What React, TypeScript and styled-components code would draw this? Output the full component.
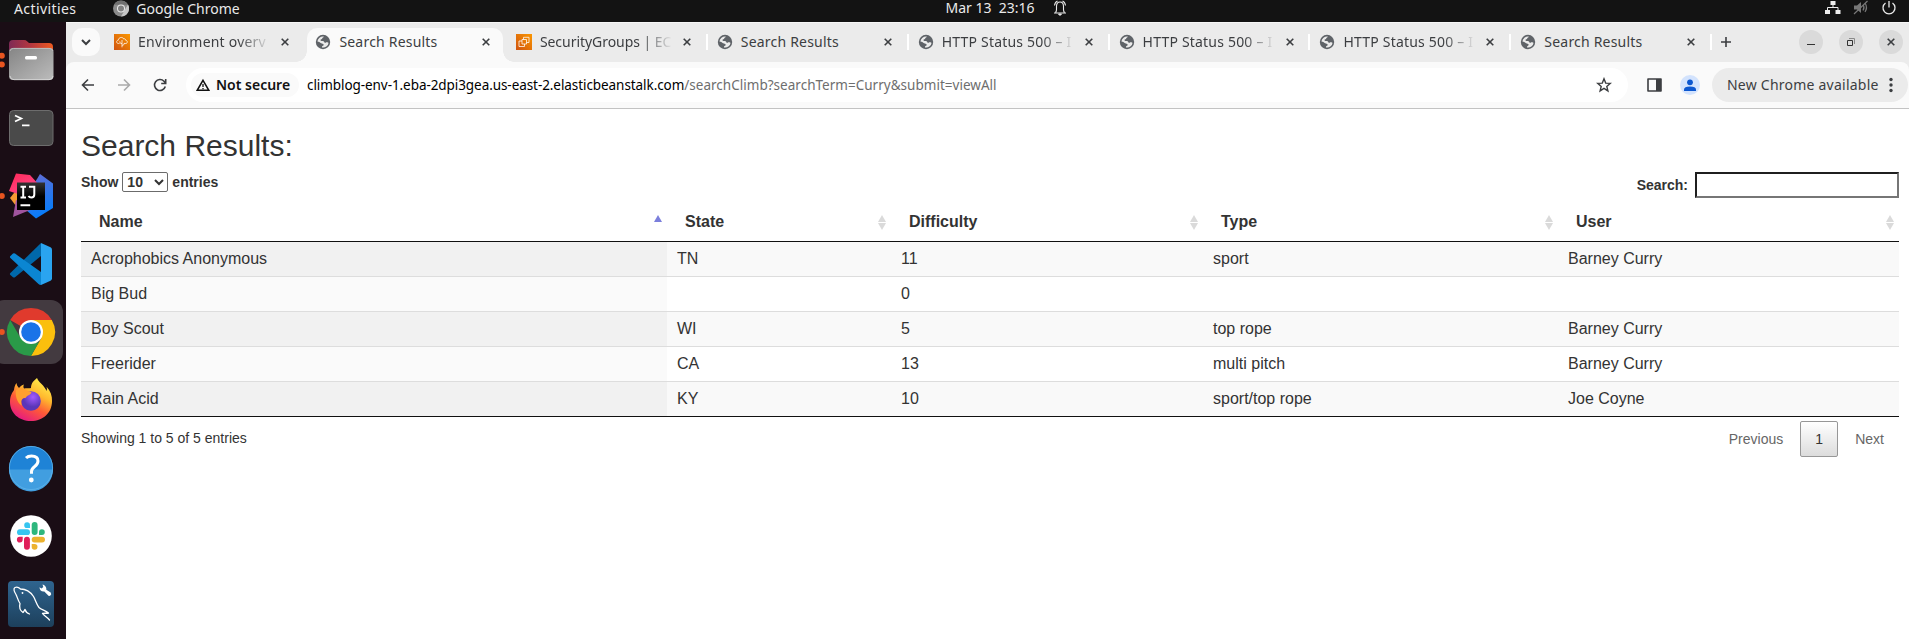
import React from "react";
import styled, { createGlobalStyle, css } from "styled-components";

const ui = `"Noto Sans", "Open Sans", sans-serif`;
const page = `"Liberation Sans", Arial, sans-serif`;

const GlobalStyle = createGlobalStyle`
  * { box-sizing: border-box; }
  html, body { margin: 0; height: 100%; overflow: hidden; background: #fff; }
  svg { display: block; flex: none; }
`;

const Desktop = styled.div`
  display: grid;
  grid-template: 22px 617px / 66px 1fr;
  width: 1909px;
  height: 639px;
  background: #fff;
  font-family: ${ui};
`;

const TopBar = styled.header`
  grid-column: 1 / -1;
  display: grid;
  grid-template-columns: 1fr auto 1fr;
  background: #131313;
  color: #eaeaea;
`;
const BarGroup = styled.div<{ $end?: boolean }>`
  display: flex;
  align-items: flex-start;
  ${(p) =>
    p.$end
      ? css`justify-content: flex-end; padding: 0 12px 0 0; gap: 12px;`
      : css`padding: 0 0 0 14px;`}
`;
const Label = styled.span<{ $size?: number; $track?: number; $weight?: number; $color?: string }>`
  display: block;
  white-space: pre;
  line-height: 18px;
  font-size: ${(p) => p.$size ?? 14}px;
  letter-spacing: ${(p) => p.$track ?? 0}px;
  font-weight: ${(p) => p.$weight ?? 400};
  color: ${(p) => p.$color ?? "inherit"};
`;
const AppMenu = styled.div`
  display: flex;
  gap: 7px;
  margin-left: 37px;
`;
const Clock = styled.div`
  display: flex;
  gap: 18px;
  height: 16px;
  align-items: center;
  padding-left: 103px;
`;

const Dock = styled.nav`
  display: flex;
  flex-direction: column;
  padding-top: 4px;
  background: #1a0d15;
  overflow: hidden;
`;
const Launcher = styled.div`
  flex: none;
  width: 66px;
  height: 68px;
`;

const Browser = styled.main`
  display: flex;
  flex-direction: column;
  background: #ebebeb;
  min-width: 0;
`;
const TabStrip = styled.div`
  display: flex;
  align-items: flex-start;
  height: 40px;
  padding: 5px 6px 0;
  border-top: 1px solid #f6f6f6;
`;
const TabSearch = styled.div`
  display: grid;
  place-items: center;
  width: 28px;
  height: 28px;
  margin-right: 5px;
  border-radius: 10px;
  background: #fafafa;
`;
const Tab = styled.div<{ $active?: boolean; $divider?: boolean }>`
  position: relative;
  display: flex;
  align-items: center;
  width: 200.9px;
  height: 34px;
  padding: 0 0 6px 9px;
  color: #3c3e41;
  ${(p) =>
    p.$active &&
    css`
      width: 196px;
      margin-left: 1px;
      margin-right: 4px;
      padding-left: 8.5px;
      border-radius: 10px 10px 0 0;
      background: #fafafa;
      &::before, &::after {
        content: "";
        position: absolute;
        bottom: 0;
        width: 11px;
        height: 11px;
      }
      &::before { left: -11px; background: radial-gradient(circle at 0 0, transparent 10.5px, #fafafa 11px); }
      &::after { right: -11px; background: radial-gradient(circle at 100% 0, transparent 10.5px, #fafafa 11px); }
    `}
  ${(p) =>
    p.$divider &&
    css`
      &::after {
        content: "";
        position: absolute;
        right: 0;
        top: 6px;
        width: 2px;
        height: 16px;
        background: #fff;
      }
    `}
`;
const TabTitle = styled.div<{ $fade?: boolean }>`
  width: 131px;
  margin: 0 12px 1px 8px;
  overflow: hidden;
  ${(p) => p.$fade && css`mask-image: linear-gradient(to right, #000 100px, transparent 133px);`}
`;
const NewTab = styled.div`
  display: grid;
  place-items: center;
  width: 28px;
  height: 28px;
`;
const WindowControls = styled.div`
  display: flex;
  gap: 16px;
  margin: 2px 0 0 auto;
`;
const RoundButton = styled.div`
  display: grid;
  place-items: center;
  width: 24px;
  height: 24px;
  border-radius: 50%;
  background: #dadada;
`;

const Toolbar = styled.div`
  display: flex;
  align-items: center;
  height: 47px;
  padding: 0 1px 0 4px;
  border-bottom: 1px solid #c3c3c3;
  border-radius: 8px 8px 0 0;
  background: #fafafa;
`;
const NavButton = styled.div`
  display: grid;
  place-items: center;
  width: 36px;
  height: 34px;
`;
const Omnibox = styled.div`
  display: flex;
  align-items: center;
  width: 1442px;
  height: 34px;
  margin: 0 19px 0 8px;
  padding: 0 16px 0 5px;
  border-radius: 17px;
  background: #fff;
`;
const SecurityChip = styled.div`
  display: flex;
  align-items: center;
  gap: 6px;
  width: 108px;
  height: 24px;
  padding-left: 5px;
  margin-right: 8px;
  border-radius: 12px;
  background: #fafafa;
  color: #111;
`;
const Url = styled.div`
  display: flex;
  flex: 1;
  color: #000;
`;
const Avatar = styled.div`
  display: grid;
  place-items: center;
  width: 20px;
  height: 20px;
  margin: 0 12px 0 18px;
  border-radius: 50%;
  background: #d3e3fd;
`;
const UpdateChip = styled.div`
  display: flex;
  align-items: center;
  justify-content: space-between;
  width: 196px;
  height: 34px;
  padding: 0 15px;
  border-radius: 17px;
  background: #ebebeb;
  color: #3c3e41;
`;

const Page = styled.section`
  flex: 1;
  padding: 20px 10px 0 15px;
  background: #fff;
  color: #333;
  font: 14px/20px ${page};
`;
const Title = styled.h2`
  margin: 0 0 10px;
  font-size: 30px;
  font-weight: 400;
  line-height: 33px;
`;
const Controls = styled.div`
  display: flex;
  justify-content: space-between;
  height: 30px;
  font-weight: 700;
`;
const LengthControl = styled.label`
  display: flex;
  align-items: flex-start;
  gap: 4px;
`;
const LengthSelect = styled.span`
  display: flex;
  align-items: center;
  justify-content: space-between;
  width: 46px;
  height: 20px;
  padding: 0 3px 0 4px;
  border: 1px solid #6b6b6b;
  border-radius: 2px;
`;
const SearchControl = styled.label`
  display: flex;
  align-items: center;
  gap: 7px;
  height: 26px;
`;
const SearchInput = styled.input`
  width: 204px;
  height: 26px;
  padding: 0;
  border: 2px solid;
  border-color: #1f1f1f #767676 #767676 #1f1f1f;
  background: #fff;
`;

const Table = styled.table`
  width: 1818px;
  table-layout: fixed;
  border-collapse: separate;
  border-spacing: 0;
  border-bottom: 1px solid #111;
  font-size: 16px;
  line-height: 18px;
`;
const HeadCell = styled.th`
  height: 40px;
  padding: 1px 5.5px 0 18px;
  border-bottom: 1px solid #111;
  text-align: left;
`;
const HeadContent = styled.div`
  display: flex;
  justify-content: space-between;
  align-items: center;
  height: 18px;
`;
const Cell = styled.td<{ $first: boolean; $sorted: boolean; $odd: boolean }>`
  height: ${(p) => (p.$first ? 34 : 35)}px;
  padding: 0 10px;
  border-top: ${(p) => (p.$first ? "0" : "1px solid #ddd")};
  background: ${(p) => (p.$odd ? (p.$sorted ? "#f1f1f1" : "#f9f9f9") : p.$sorted ? "#fafafa" : "#fff")};
`;

const Footer = styled.div`
  display: flex;
  justify-content: space-between;
  padding-top: 4px;
`;
const Info = styled.div`
  padding-top: 7px;
`;
const Pager = styled.div`
  display: flex;
  align-items: center;
  color: #666;
`;
const PageLink = styled.span`
  padding: 0 15px;
`;
const CurrentPage = styled.span`
  display: grid;
  place-items: center;
  width: 38px;
  height: 36px;
  margin: 0 2px;
  border: 1px solid #979797;
  border-radius: 2px;
  background: linear-gradient(#fff, #dcdcdc);
  color: #333;
`;

const Globe = () => (
  <svg width="16" height="16" viewBox="0 0 16 16">
    <circle cx="8" cy="8" r="7.200" fill="#5f6368" />
    <path
      d="M8.800 2.500C8.700 3.600 7.200 3.500 7.200 4.600c0 .9-1.700.5-1.700 1.500 0 .9.800 1 2.200.9 1.600-.1 1.300 1.600 2.300 1.800.9.200 1.200-.9 2.100-.8.700.1.700.9 1.500.7A5.600 5.600 0 0 1 7 13.500c-.1-1 .3-1.500 1-1.700.8-.3.900-1.300.2-1.800-.8-.5-1.900-.2-2.600-.9C4.900 8.300 3.900 7.500 2.400 7.500A5.600 5.600 0 0 1 8.800 2.500Z"
      fill="#ebebeb"
    />
  </svg>
);
const AwsIcon = ({ kind }: { kind: "beanstalk" | "ec2" }) => (
  <svg width="16" height="16" viewBox="0 0 16 16">
    <defs>
      <linearGradient id="aws" x1="0" y1="1" x2="1" y2="0">
        <stop stopColor="#cf5310" />
        <stop offset="1" stopColor="#fb9700" />
      </linearGradient>
    </defs>
    <path d="M0 0h16v16H0z" fill="url(#aws)" />
    <g fill="none" stroke="#fff" strokeWidth=".9" opacity=".85">
      {kind === "beanstalk" ? (
        <path d="M5.500 9.500H4.400C1.900 9.300 2.200 6.300 4.300 6.200 4.500 3 9 2.600 9.700 5c1-.6 1.900.1 1.900 1.200 2.400.3 2.100 3.300.2 3.300h-1.500M8 13.300V6M8 9.600C6 9.600 5.800 8.500 5.800 7.400M8 11.300c1.800 0 2.300-1 2.300-2.400" />
      ) : (
        <path d="M6 5.500h4.500V10H6zM7.500 5.500V3.300H13v5.200h-2.500M6 7H3v5.500h5.500V10" />
      )}
    </g>
  </svg>
);
const Close = ({ size = 8 }: { size?: number }) => (
  <svg width={size} height={size} viewBox="0 0 8 8">
    <path d="M.7.7l6.600 6.600M7.300.7L.7 7.300" stroke="#3c3e41" strokeWidth="1.600" />
  </svg>
);
const SortIcon = ({ asc }: { asc?: boolean }) => (
  <svg width="8" height="15" viewBox="0 0 8 15">
    <path d="M4 0l4 7H0z" fill={asc ? "#7b7fdc" : "#dadada"} />
    {!asc && <path d="M4 15l4-7H0z" fill="#dadada" />}
  </svg>
);

const Dots = ({ ys }: { ys: number[] }) => (
  <>
    {ys.map((y) => (
      <circle key={y} cx="1.800" cy={y} r="3" fill="#e95420" />
    ))}
  </>
);

const FilesIcon = () => (
  <svg width="66" height="68">
    <defs>
      <linearGradient id="fback"><stop stopColor="#7e2a55" /><stop offset=".5" stopColor="#b5373f" /><stop offset="1" stopColor="#ee5a20" /></linearGradient>
      <linearGradient id="ffront" x1="0" y1="0" x2="1" y2="1"><stop stopColor="#858585" /><stop offset="1" stopColor="#bcbcbc" /></linearGradient>
    </defs>
    <Dots ys={[29.7, 38.4]} />
    <path d="M9 30V18q0-4 4-4h11q2 0 3 1.200l2 1.800h20q4 0 4 4v9z" fill="url(#fback)" />
    <rect x="9" y="22" width="44.500" height="32" rx="4" fill="url(#ffront)" />
    <path d="M10 50q.5 3.700 4 3.700h35q3.500 0 4-3.700" fill="none" stroke="#dedede" strokeWidth=".8" />
    <path d="M10 25q.5-2.600 3.500-2.600h35.500q3.500 0 4 2.600" fill="none" stroke="#c8c8c8" strokeWidth=".8" />
    <rect x="25" y="30" width="12" height="3.500" rx="1.500" fill="#fff" />
  </svg>
);
const TerminalIcon = () => (
  <svg width="66" height="68">
    <rect x="9.500" y="16.500" width="43.500" height="35" rx="4" fill="#4a4a4a" stroke="#6d6d6d" />
    <path d="M15 21.500l6.300 3-6.300 3M22 31.300h7.500" fill="none" stroke="#fff" strokeWidth="1.800" />
  </svg>
);
const IdeaIcon = () => (
  <svg width="66" height="68">
    <defs>
      <linearGradient id="ijb" x1="0" y1="0" x2=".3" y2="1"><stop stopColor="#6b6bd0" /><stop offset="1" stopColor="#087cfa" /></linearGradient>
      <linearGradient id="ijp" x1="0" y1="0" x2="1" y2="1"><stop stopColor="#fe2857" /><stop offset=".5" stopColor="#ff3d77" /><stop offset="1" stopColor="#7a62c8" /></linearGradient>
      <linearGradient id="ijk" x1="0" y1="0" x2="0" y2="1"><stop stopColor="#333" /><stop offset=".5" stopColor="#000" /></linearGradient>
    </defs>
    <Dots ys={[34]} />
    <path d="M18 26L10 36l6 8 10-2z" fill="#f49a32" />
    <path d="M40 12l13 9.500V46L36 56.500 26 48l8-26z" fill="url(#ijb)" />
    <path d="M16 38l-3 17 22-9z" fill="#a0549e" />
    <path d="M16 11.500L30 13l10 11 5 8H18L9 29z" fill="url(#ijp)" />
    <path d="M17 20.500h28V48H17z" fill="url(#ijk)" />
    <path d="M20.500 24.800h5.500M23.200 24.800v10.700M20.500 35.500h5.500M29 24.800h5.300v7.700q0 3-3 3-1.800 0-2.800-1.500M20.500 43.200h9.700" fill="none" stroke="#fff" strokeWidth="2" />
  </svg>
);
const CodeIcon = () => (
  <svg width="66" height="68">
    <path d="M41 13v13L15 47.300q-1 .6-2 0L10.400 45q-1-1 0-2z" fill="#0068ab" />
    <path d="M10.400 28q-1-1 0-2l2.600-2.400q1-.6 2 0L41 42v13q-1.500 0-2.500-1z" fill="#0b86d2" />
    <path d="M41 13l9.500 4.300q1.500.8 1.500 2.500v28.400q0 1.700-1.500 2.500L41 55z" fill="#2aa4f0" />
  </svg>
);
const ChromeIcon = () => (
  <svg width="66" height="68">
    <rect x="-8" y="2" width="71" height="64" rx="12" fill="#433a40" />
    <Dots ys={[34]} />
    <path d="M31 34L10.200 22a24 24 0 0 1 41.600 0z" fill="#e03a2d" />
    <path d="M31 22h20.800A24 24 0 0 1 31 58l10.400-18z" fill="#fbbf0d" />
    <path d="M31 58A24 24 0 0 1 10.200 22l10.400 18L31 46l8-2z" fill="#2a9a48" />
    <path d="M41.400 40L31 58l8-14z" fill="#fbbf0d" />
    <circle cx="31" cy="34" r="12" fill="#fff" />
    <circle cx="31" cy="34" r="9.800" fill="#1a73e8" />
  </svg>
);
const FirefoxIcon = () => (
  <svg width="66" height="68">
    <defs>
      <linearGradient id="fx" x1=".8" y1="0" x2=".25" y2="1"><stop stopColor="#fff44f" /><stop offset=".35" stopColor="#ffb82e" /><stop offset=".62" stopColor="#ff5a36" /><stop offset="1" stopColor="#e31587" /></linearGradient>
      <radialGradient id="fxp" cx=".6" cy=".3"><stop stopColor="#a35bff" /><stop offset="1" stopColor="#5a36b8" /></radialGradient>
    </defs>
    <path d="M10 36c0-6 2-9 4-12 .3-3 1-5 2.500-7 .3 2 1 3.500 2.500 5 1.500-1.800 3-3 5-3.500-.8 1.200-.8 2.500 0 4 3-.6 5 0 7-.5 0-5 3-7.500 6-10 .8 3 4 5 6 7.500s3 4 3.500 5.500c.6-1.600.6-2.600 0-4.300 4 4.300 5.800 9 5.500 14.300C52 47 43 55 31 55S10 47 10 36z" fill="url(#fx)" />
    <circle cx="31" cy="35" r="9.800" fill="url(#fxp)" />
    <path d="M16 24c5-3 8-1.500 11 .8 2 .8 4 1 4.500 1.500-.5 3-5.500 3.300-5.500 5.500-4 0-6 3-4 8-5-3-7-10-6-15.800z" fill="#ffa030" />
  </svg>
);
const HelpIcon = () => (
  <svg width="66" height="68">
    <circle cx="31" cy="34" r="22" fill="#1f83d6" />
    <path d="M9 35.500h44A22 22 0 0 1 9 35.500z" fill="#419ee0" />
    <circle cx="31" cy="34" r="21.600" fill="none" stroke="#5fb4ea" strokeWidth=".8" />
    <path d="M26 24q2-2 5.500-2 6.500 0 6.500 5 0 3-3.300 5.500Q31.500 35 31.500 37.500v2.300" fill="none" stroke="#fff" strokeWidth="3" />
    <circle cx="31.300" cy="46" r="2.400" fill="#fff" />
  </svg>
);
const SlackIcon = () => (
  <svg width="66" height="68">
    <circle cx="31" cy="34" r="20.800" fill="#fff" />
    <g fill="#36c5f0"><rect x="17" y="27.300" width="13" height="5.800" rx="2.900" /><path d="M30 26v-3a2.900 2.900 0 1 0-2.900 3z" /></g>
    <g fill="#2eb67d"><rect x="31.700" y="20" width="5.900" height="13" rx="2.900" /><path d="M39 33h3a2.900 2.900 0 1 0-3-2.900z" /></g>
    <g fill="#ecb22e"><rect x="31.700" y="34.700" width="13.300" height="5.800" rx="2.900" /><path d="M31.700 42v3a2.900 2.900 0 1 0 2.900-3z" /></g>
    <g fill="#e01e5a"><rect x="24" y="34.700" width="5.900" height="13" rx="2.900" /><path d="M22.700 34.700h-3a2.900 2.900 0 1 0 3 2.900z" /></g>
  </svg>
);
const WorkbenchIcon = () => (
  <svg width="66" height="68">
    <defs><linearGradient id="wb" x1="0" y1="0" x2="0" y2="1"><stop stopColor="#2f648f" /><stop offset="1" stopColor="#1d405c" /></linearGradient></defs>
    <rect x="8" y="11" width="46" height="46" rx="4" fill="url(#wb)" />
    <g fill="none" stroke="#fff" strokeWidth="1.300" strokeLinejoin="round" strokeLinecap="round">
      <path d="M29.500 44c-2.500-1-4-2.500-4.500-4.500-1 1-1 2.500-2 3-3-2-4-5-3-9-2-3-2.500-6-4-9-2-3-2.800-6-1-7 2-1 4 0 5.500 1.500 6 0 10 3 13 7.500 2 3.500 3 8 5.500 11 2 2 6 3 9.500 5.500-2 .5-4 0-6 .5 1.500 2.300 5 4 7 6.500" />
      <path d="M22.500 22.800v.3" strokeWidth="1.800" />
    </g>
    <path d="M42.500 14.500l.8 2.500-1.800 1.500-2-1.200c0 3 2.300 4.700 4.800 4.200l4.200 4.300q1.700.8 2.700-1.500l-.5-1.800-4.400-2.700c.5-2.500-1.300-4.800-3.800-5.300z" fill="#fff" />
  </svg>
);

const tabs = [
  { title: "Environment overv", track: 0.22, icon: <AwsIcon kind="beanstalk" />, fade: true },
  { title: "Search Results", track: 0.2, icon: <Globe />, active: true },
  { title: "SecurityGroups | EC", track: -0.05, icon: <AwsIcon kind="ec2" />, fade: true, divider: true },
  { title: "Search Results", track: 0.2, icon: <Globe />, divider: true },
  { title: "HTTP Status 500 – I", track: 0.2, icon: <Globe />, fade: true, divider: true },
  { title: "HTTP Status 500 – I", track: 0.2, icon: <Globe />, fade: true, divider: true },
  { title: "HTTP Status 500 – I", track: 0.2, icon: <Globe />, fade: true, divider: true },
  { title: "Search Results", track: 0.2, icon: <Globe />, divider: true },
];

const columns = [
  { name: "Name", width: 586 },
  { name: "State", width: 224 },
  { name: "Difficulty", width: 312 },
  { name: "Type", width: 355 },
  { name: "User", width: 341 },
];
const climbs = [
  ["Acrophobics Anonymous", "TN", "11", "sport", "Barney Curry"],
  ["Big Bud", "", "0", "", ""],
  ["Boy Scout", "WI", "5", "top rope", "Barney Curry"],
  ["Freerider", "CA", "13", "multi pitch", "Barney Curry"],
  ["Rain Acid", "KY", "10", "sport/top rope", "Joe Coyne"],
];

export default function App() {
  return (
    <Desktop>
      <GlobalStyle />
      <TopBar>
        <BarGroup>
          <Label $track={0.4}>Activities</Label>
          <AppMenu>
            <svg width="16" height="17" viewBox="0 0 16 17">
              <circle cx="8" cy="8.500" r="8" fill="#8b8b8b" />
              <path d="M1 4.800A8 8 0 0 1 15 4.800z" fill="#6f6f6f" />
              <path d="M15 4.500A8 8 0 0 1 8 16.500l4-7z" fill="#c6c6c6" />
              <circle cx="8" cy="8.500" r="4" fill="#e8e8e8" />
              <circle cx="8" cy="8.500" r="3" fill="#808080" />
            </svg>
            <Label>Google Chrome</Label>
          </AppMenu>
        </BarGroup>
        <Clock>
          <Label>{"Mar 13  23:16"}</Label>
          <svg width="14" height="16" viewBox="0 0 14 16">
            <path d="M1 13h12M2.500 12.500q1-1 1-3V6.500Q3.500 2 7 2t3.500 4.500v3q0 2 1 3M1.500 5.500Q2 2 4.500 1M12.500 5.500Q12 2 9.500 1" fill="none" stroke="#eaeaea" strokeWidth="1.100" />
            <path d="M5.500 14h3L7 15.500z" fill="#eaeaea" stroke="#eaeaea" />
          </svg>
        </Clock>
        <BarGroup $end>
          <svg width="16" height="16" viewBox="0 0 16 16">
            <path d="M5.500 1h5v4h-5zM0 10h5v4H0zM10.500 10h5v4h-5z" fill="#eee" />
            <path d="M8 4v3.500M2.500 10V7.500h10.500V10" fill="none" stroke="#eee" />
          </svg>
          <svg width="16" height="16" viewBox="0 0 16 16">
            <path d="M1 5.500h3l4-3.500v11l-4-3.500H1z" fill="#777" />
            <path d="M10 4.500q2 3 0 6M12 3q3 4.500 0 9M1 14L14.500 1" fill="none" stroke="#777" strokeWidth="1.200" />
          </svg>
          <svg width="16" height="16" viewBox="0 0 16 16">
            <path d="M4.500 3a6 6 0 1 0 7 0M8 1v6.500" fill="none" stroke="#eaeaea" strokeWidth="1.300" />
          </svg>
        </BarGroup>
      </TopBar>

      <Dock>
        {[FilesIcon, TerminalIcon, IdeaIcon, CodeIcon, ChromeIcon, FirefoxIcon, HelpIcon, SlackIcon, WorkbenchIcon].map((Icon, i) => (
          <Launcher key={i}><Icon /></Launcher>
        ))}
      </Dock>

      <Browser>
        <TabStrip>
          <TabSearch>
            <svg width="10" height="8" viewBox="0 0 10 8"><path d="M1 2l4 4 4-4" fill="none" stroke="#3c3e41" strokeWidth="2" /></svg>
          </TabSearch>
          {tabs.map((t, i) => (
            <Tab key={i} $active={t.active} $divider={t.divider}>
              {t.icon}
              <TabTitle $fade={t.fade}><Label $track={t.track}>{t.title}</Label></TabTitle>
              <Close />
            </Tab>
          ))}
          <NewTab>
            <svg width="12" height="12" viewBox="0 0 12 12"><path d="M6 1v10M1 6h10" stroke="#3c3e41" strokeWidth="1.600" /></svg>
          </NewTab>
          <WindowControls>
            <RoundButton><svg width="10" height="10"><path d="M1 7.500h8" stroke="#333" /></svg></RoundButton>
            <RoundButton>
              <svg width="10" height="10"><path d="M1.500 3.500h5v5h-5z" fill="none" stroke="#333" /><path d="M3 1.500h5.500V7" fill="none" stroke="#8a8a8a" /></svg>
            </RoundButton>
            <RoundButton><Close /></RoundButton>
          </WindowControls>
        </TabStrip>

        <Toolbar>
          <NavButton><svg width="14" height="14" viewBox="0 0 14 14"><path d="M13 7H2M7 1.500L1.500 7 7 12.500" fill="none" stroke="#3c3e41" strokeWidth="1.600" /></svg></NavButton>
          <NavButton><svg width="14" height="14" viewBox="0 0 14 14"><path d="M1 7h11M7 1.500L12.500 7 7 12.500" fill="none" stroke="#aaa" strokeWidth="1.600" /></svg></NavButton>
          <NavButton><svg width="14" height="14" viewBox="0 0 14 14"><path d="M12.300 8.500A5.500 5.500 0 1 1 11 3.200L12.500 5M12.700 1v4.500H8.200" fill="none" stroke="#3c3e41" strokeWidth="1.600" /></svg></NavButton>
          <Omnibox>
            <SecurityChip>
              <svg width="14" height="14" viewBox="0 0 14 14"><path d="M7 2.300l5.800 10H1.200z" fill="none" stroke="#111" strokeWidth="1.500" /><path d="M7 6v3M7 10v1.300" stroke="#111" strokeWidth="1.300" /></svg>
              <Label $weight={600}>Not secure</Label>
            </SecurityChip>
            <Url>
              <Label $size={13.5} $track={-0.07}>climblog-env-1.eba-2dpi3gea.us-east-2.elasticbeanstalk.com</Label>
              <Label $size={13.5} $track={0.02} $color="#6e6e6e">/searchClimb?searchTerm=Curry&amp;submit=viewAll</Label>
            </Url>
            <svg width="16" height="16" viewBox="0 0 16 16"><path d="M8 1.800l1.700 4.300 4.600.3-3.500 3 1.100 4.500L8 11.400l-3.900 2.500 1.100-4.500-3.500-3 4.600-.3z" fill="none" stroke="#3c3e41" strokeWidth="1.400" /></svg>
          </Omnibox>
          <svg width="15" height="14" viewBox="0 0 15 14"><path d="M1 1h13v12H1z" fill="none" stroke="#3c3e41" strokeWidth="1.600" strokeLinejoin="round" /><path d="M9 1h5v12H9z" fill="#3c3e41" /></svg>
          <Avatar>
            <svg width="14" height="14" viewBox="0 0 14 14"><circle cx="7" cy="4.300" r="2.900" fill="#0b57d0" /><path d="M1 13v-1.500Q1 8.600 7 8.600t6 2.900V13z" fill="#0b57d0" /></svg>
          </Avatar>
          <UpdateChip>
            <Label $track={0.23}>New Chrome available</Label>
            <svg width="4" height="16"><circle cx="2" cy="2.500" r="1.700" fill="#3c3e41" /><circle cx="2" cy="8" r="1.700" fill="#3c3e41" /><circle cx="2" cy="13.500" r="1.700" fill="#3c3e41" /></svg>
          </UpdateChip>
        </Toolbar>

        <Page>
          <Title>Search Results:</Title>
          <Controls>
            <LengthControl>
              Show
              <LengthSelect>
                10
                <svg width="10" height="8" viewBox="0 0 10 8"><path d="M1 2l4 4 4-4" fill="none" stroke="#333" strokeWidth="2" /></svg>
              </LengthSelect>
              entries
            </LengthControl>
            <SearchControl>Search: <SearchInput /></SearchControl>
          </Controls>
          <Table>
            <colgroup>{columns.map((c) => <col key={c.name} width={c.width} />)}</colgroup>
            <thead>
              <tr>
                {columns.map((c, i) => (
                  <HeadCell key={c.name}><HeadContent>{c.name}<SortIcon asc={i === 0} /></HeadContent></HeadCell>
                ))}
              </tr>
            </thead>
            <tbody>
              {climbs.map((row, r) => (
                <tr key={r}>
                  {row.map((value, c) => (
                    <Cell key={c} $first={r === 0} $sorted={c === 0} $odd={r % 2 === 0}>{value}</Cell>
                  ))}
                </tr>
              ))}
            </tbody>
          </Table>
          <Footer>
            <Info>Showing 1 to 5 of 5 entries</Info>
            <Pager>
              <PageLink>Previous</PageLink>
              <CurrentPage>1</CurrentPage>
              <PageLink>Next</PageLink>
            </Pager>
          </Footer>
        </Page>
      </Browser>
    </Desktop>
  );
}
